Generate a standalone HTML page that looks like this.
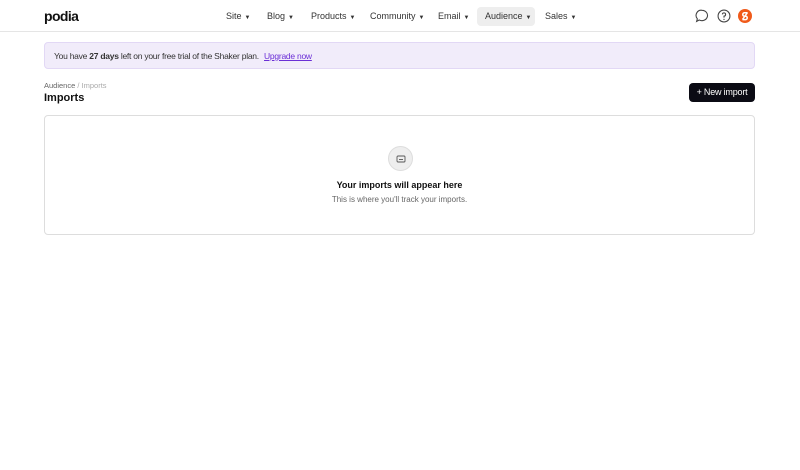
<!DOCTYPE html>
<html><head><style>
*{box-sizing:border-box;margin:0;padding:0}
body{width:800px;height:470px;background:#fff;font-family:"Liberation Sans",sans-serif;color:#111;position:relative;overflow:hidden}
.hdr{position:absolute;top:0;left:0;width:800px;height:32px;border-bottom:1px solid #e5e5e5}
.logo{position:absolute;left:44px;top:8px;font-size:14px;font-weight:bold;letter-spacing:-0.6px}
.nav{position:absolute;top:7px;font-size:9px;color:#333;height:19px;line-height:19px}
.nav span.c{font-size:6px;margin-left:3px}
.aud{background:#eee;border-radius:4px;padding:0 8px}
.banner{position:absolute;left:44px;top:42px;width:711px;height:27px;background:#f1ecfa;border:1px solid #e2d8f5;border-radius:4px;font-size:8.5px;line-height:26px;padding-left:9px;color:#333;letter-spacing:-0.25px}
.banner a{color:#6b2fd6;text-decoration:underline;margin-left:3px}
.bc{position:absolute;left:44px;top:81px;font-size:7.5px;color:#666}
.h1{position:absolute;left:44px;top:92px;font-size:11px;font-weight:bold}
.btn{position:absolute;left:689px;top:83px;width:66px;height:19px;background:#0b0b14;color:#fff;border-radius:4px;font-size:9px;line-height:19px;text-align:center;letter-spacing:-0.2px}
.card{position:absolute;left:44px;top:115px;width:711px;height:120px;border:1px solid #ddd;border-radius:4px;text-align:center}
.ic{position:absolute;left:343px;top:30px;width:25px;height:25px;border-radius:50%;background:#eee;border:1px solid #ddd}
.t1{position:absolute;top:64px;width:100%;font-size:9px;font-weight:bold}
.t2{position:absolute;top:79px;width:100%;font-size:8px;color:#666}
</style></head><body>
<div class="hdr">
<div class="logo">podia</div>
<div class="nav" style="left:226px">Site<span class="c">▼</span></div>
<div class="nav" style="left:267px">Blog<span class="c">▼</span></div>
<div class="nav" style="left:311px">Products<span class="c">▼</span></div>
<div class="nav" style="left:370px">Community<span class="c">▼</span></div>
<div class="nav" style="left:438px">Email<span class="c">▼</span></div>
<div class="nav aud" style="left:477px;width:58px">Audience<span class="c">▼</span></div>
<div class="nav" style="left:545px">Sales<span class="c">▼</span></div>
<svg style="position:absolute;left:695px;top:9px" width="14" height="14" viewBox="0 0 13 13"><path d="M6.5 1.2a5.2 4.8 0 1 1-2.6 9L1.5 11.5l.7-2.4A4.8 4.8 0 0 1 6.5 1.2z" fill="none" stroke="#444" stroke-width="1"/></svg>
<svg style="position:absolute;left:717px;top:9px" width="14" height="14" viewBox="0 0 13 13"><circle cx="6.5" cy="6.5" r="5.5" fill="none" stroke="#444" stroke-width="1"/><path d="M5 5a1.5 1.5 0 1 1 1.5 1.6V8" fill="none" stroke="#444" stroke-width="1"/><circle cx="6.5" cy="9.6" r=".6" fill="#444"/></svg>
<svg style="position:absolute;left:738px;top:9px" width="14" height="14" viewBox="0 0 14 14"><circle cx="7" cy="7" r="7" fill="#f05a1a"/><path d="M9.5 3.8H6a1.8 1.8 0 0 0 0 3.4h2a1.8 1.8 0 0 1 0 3.4H4.5M9.5 3.5L4.5 10.5" fill="none" stroke="#fff" stroke-width="1.5"/></svg>
</div>
<div class="banner">You have <b>27 days</b> left on your free trial of the Shaker plan. <a>Upgrade now</a></div>
<div class="bc">Audience <span style="color:#aaa">/ Imports</span></div>
<div class="h1">Imports</div>
<div class="btn">+ New import</div>
<div class="card">
<div class="ic"><svg style="position:absolute;left:7px;top:7px" width="10" height="10" viewBox="0 0 10 10"><rect x="1" y="2" width="8" height="6" rx="1" fill="none" stroke="#555" stroke-width=".9"/><path d="M3 5.5h4" stroke="#555" stroke-width=".9"/></svg></div>
<div class="t1">Your imports will appear here</div>
<div class="t2">This is where you'll track your imports.</div>
</div>
</body></html>
